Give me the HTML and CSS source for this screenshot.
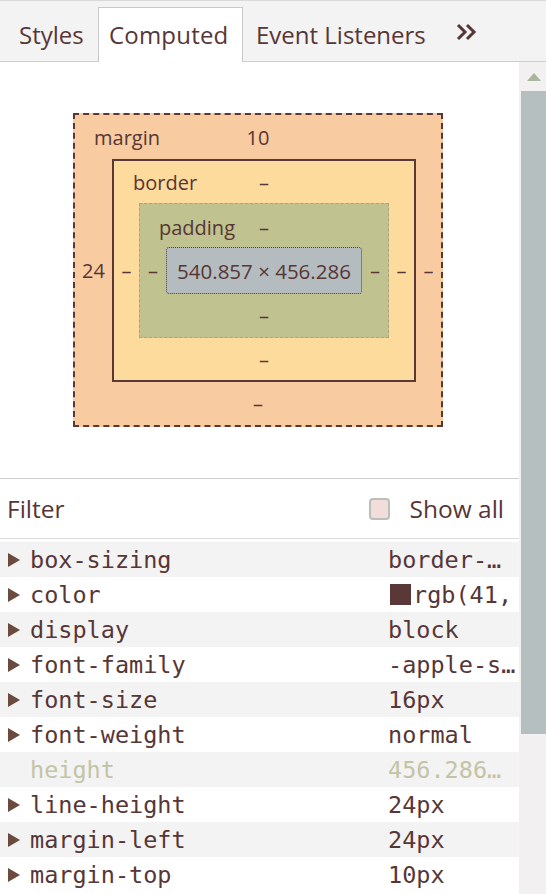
FILE: index.html
```html
<!DOCTYPE html>
<html>
<head>
<meta charset="utf-8">
<link rel="stylesheet" href="styles.css">
</head>
<body>
<div class="tabbar">
  <div class="tab t-styles">Styles</div>
  <div class="tab active">Computed</div>
  <div class="tab t-events">Event Listeners</div>
  <div class="more">
    <svg width="22" height="18" viewBox="0 0 22 18"><path d="M2 2 L9 9 L2 16 M11 2 L18 9 L11 16" fill="none" stroke="#573636" stroke-width="3"/></svg>
  </div>
</div>
<div class="main">
  <div class="content">
    <section class="bm-section">
      <div class="bm bm-margin">
        <div class="bm-top"><span class="bm-label">margin</span><span class="bm-val">10</span><span></span></div>
        <div class="bm-mid m-mid">
          <span class="bm-side">24</span>
          <div class="bm bm-border">
            <div class="bm-top"><span class="bm-label">border</span><span class="bm-val">–</span><span></span></div>
            <div class="bm-mid b-mid">
              <span class="bm-side">–</span>
              <div class="bm bm-padding">
                <div class="bm-top"><span class="bm-label">padding</span><span class="bm-val">–</span><span></span></div>
                <div class="bm-mid p-mid">
                  <span class="bm-side">–</span>
                  <div class="bm-content">540.857 × 456.286</div>
                  <span class="bm-side">–</span>
                </div>
                <div class="bm-bottom">–</div>
              </div>
              <span class="bm-side">–</span>
            </div>
            <div class="bm-bottom">–</div>
          </div>
          <span class="bm-side">–</span>
        </div>
        <div class="bm-bottom">–</div>
      </div>
    </section>
    <div class="filter">
      <span class="filter-text">Filter</span>
      <label class="showall"><span class="checkbox"></span><span>Show all</span></label>
    </div>
    <div class="rows">
      <div class="row"><span class="tri"></span><span class="name">box-sizing</span><span class="value">border-…</span></div>
      <div class="row"><span class="tri"></span><span class="name">color</span><span class="value"><span class="swatch"></span>rgb(41,</span></div>
      <div class="row"><span class="tri"></span><span class="name">display</span><span class="value">block</span></div>
      <div class="row"><span class="tri"></span><span class="name">font-family</span><span class="value">-apple-s…</span></div>
      <div class="row"><span class="tri"></span><span class="name">font-size</span><span class="value">16px</span></div>
      <div class="row"><span class="tri"></span><span class="name">font-weight</span><span class="value">normal</span></div>
      <div class="row inherited"><span class="tri none"></span><span class="name">height</span><span class="value">456.286…</span></div>
      <div class="row"><span class="tri"></span><span class="name">line-height</span><span class="value">24px</span></div>
      <div class="row"><span class="tri"></span><span class="name">margin-left</span><span class="value">24px</span></div>
      <div class="row"><span class="tri"></span><span class="name">margin-top</span><span class="value">10px</span></div>
    </div>
  </div>
  <div class="scrollbar">
    <div class="sb-up"><span class="sb-arrow"></span></div>
    <div class="sb-thumb"></div>
  </div>
</div>
</body>
</html>
```

FILE: styles.css
```css
html, body {
  margin: 0;
  padding: 0;
  background: #fff;
  color: #573636;
  font-family: "Open Sans", "Noto Sans", sans-serif;
  width: 546px;
  height: 894px;
  overflow: hidden;
}

.tabbar {
  background: #f3f3f3;
  border-top: 1px solid #d9d9d9;
  border-bottom: 1px solid #cfcfcf;
  box-sizing: border-box;
  height: 62px;
  display: flex;
  align-items: flex-end;
  padding-left: 8px;
}

.tab {
  height: 54px;
  line-height: 55px;
  font-size: 24px;
  box-sizing: border-box;
  white-space: nowrap;
}

.t-styles {
  width: 90px;
  padding-left: 11px;
}

.tab.active {
  width: 145px;
  background: #fff;
  border: 1px solid #c9c9c9;
  border-bottom: none;
  margin-bottom: -1px;
  height: 55px;
  line-height: 54px;
  padding-left: 10px;
  letter-spacing: 0.2px;
}

.t-events {
  width: 200px;
  padding-left: 13px;
}

.more {
  height: 54px;
  display: flex;
  align-items: center;
  padding-left: 13px;
  padding-bottom: 5px;
  box-sizing: border-box;
}

.more svg { display: block; }

.main {
  display: flex;
  height: 832px;
}

.content {
  width: 519px;
  flex: none;
}

.bm-section {
  height: 417px;
  border-bottom: 1px solid #cfcfcf;
  box-sizing: border-box;
  padding-top: 51px;
  padding-left: 73px;
}

.bm {
  box-sizing: border-box;
  display: flex;
  flex-direction: column;
  font-size: 20px;
}

.bm-margin {
  width: 370px;
  height: 314px;
  background: #f8cba0;
  border: 2px dashed #5b3838;
}

.bm-border {
  width: 304px;
  height: 223px;
  background: #fddb9c;
  border: 2px solid #5b3838;
}

.bm-padding {
  width: 250px;
  height: 135px;
  background: #c0c38f;
  border: 1px dashed #b0a27c;
}

.bm-top {
  display: grid;
  grid-template-columns: 1fr auto 1fr;
  align-items: center;
}

.bm-margin > .bm-top { height: 44px; }
.bm-border > .bm-top { height: 42px; }
.bm-padding > .bm-top { height: 43px; padding-top: 3px; box-sizing: border-box; }

.bm-margin > .bm-bottom { height: 43px; }
.bm-padding > .bm-bottom { height: 43px; }

.bm-label { padding-left: 19px; }

.bm-val { text-align: center; }

.bm-mid {
  display: flex;
  align-items: center;
}

.bm-side {
  flex: 1;
  text-align: center;
}

.m-mid > .bm-side:first-child { flex: none; width: 37px; }
.m-mid > .bm-side:last-child { flex: none; width: 25px; }
.b-mid > .bm-side { flex: none; width: 25px; }
.p-mid > .bm-side { flex: none; width: 26px; }

.bm-bottom {
  flex: 1;
  display: flex;
  align-items: center;
  justify-content: center;
}

.bm-content {
  width: 196px;
  height: 47px;
  box-sizing: border-box;
  background: #b5bcbf;
  border: 1px dotted #5b3838;
  border-radius: 3px;
  display: flex;
  align-items: center;
  justify-content: center;
  font-size: 20.5px;
}

.filter {
  height: 60px;
  border-bottom: 1px solid #dcdcdc;
  box-sizing: border-box;
  display: flex;
  align-items: center;
  justify-content: space-between;
  padding: 0 15px 0 7px;
  font-size: 24.5px;
}

.showall {
  display: flex;
  align-items: center;
}

.checkbox {
  width: 21px;
  height: 22px;
  box-sizing: border-box;
  border: 2px solid #b8c0b8;
  border-radius: 4px;
  background: #f2dcdc;
  margin-right: 19px;
}

.rows {
  padding-top: 3px;
  font-family: "DejaVu Sans Mono", "Liberation Mono", monospace;
  font-size: 23.5px;
}

.row {
  height: 35px;
  display: flex;
  align-items: center;
  white-space: nowrap;
}

.row:nth-child(odd) { background: #f3f3f3; }

.tri {
  width: 0;
  height: 0;
  border-top: 7px solid transparent;
  border-bottom: 7px solid transparent;
  border-left: 12px solid #6b4b3e;
  margin-left: 8px;
  margin-right: 10px;
}

.tri.none { border-left-color: transparent; }

.name {
  width: 358px;
}

.value {
  display: flex;
  align-items: center;
}

.swatch {
  width: 21px;
  height: 21px;
  background: #5b3838;
  margin-left: 2px;
  margin-right: 2px;
}

.inherited { color: #c3c4a6; }

.scrollbar {
  width: 27px;
  flex: none;
  background: #f2f0f0;
  display: flex;
  flex-direction: column;
}

.sb-up {
  height: 29px;
  display: flex;
  justify-content: center;
  align-items: center;
  padding-left: 2px;
}

.sb-arrow {
  width: 0;
  height: 0;
  border-left: 7px solid transparent;
  border-right: 7px solid transparent;
  border-bottom: 8px solid #a9b69b;
}

.sb-thumb {
  height: 643px;
  margin-left: 2px;
  background: #b6bfbf;
}
```
